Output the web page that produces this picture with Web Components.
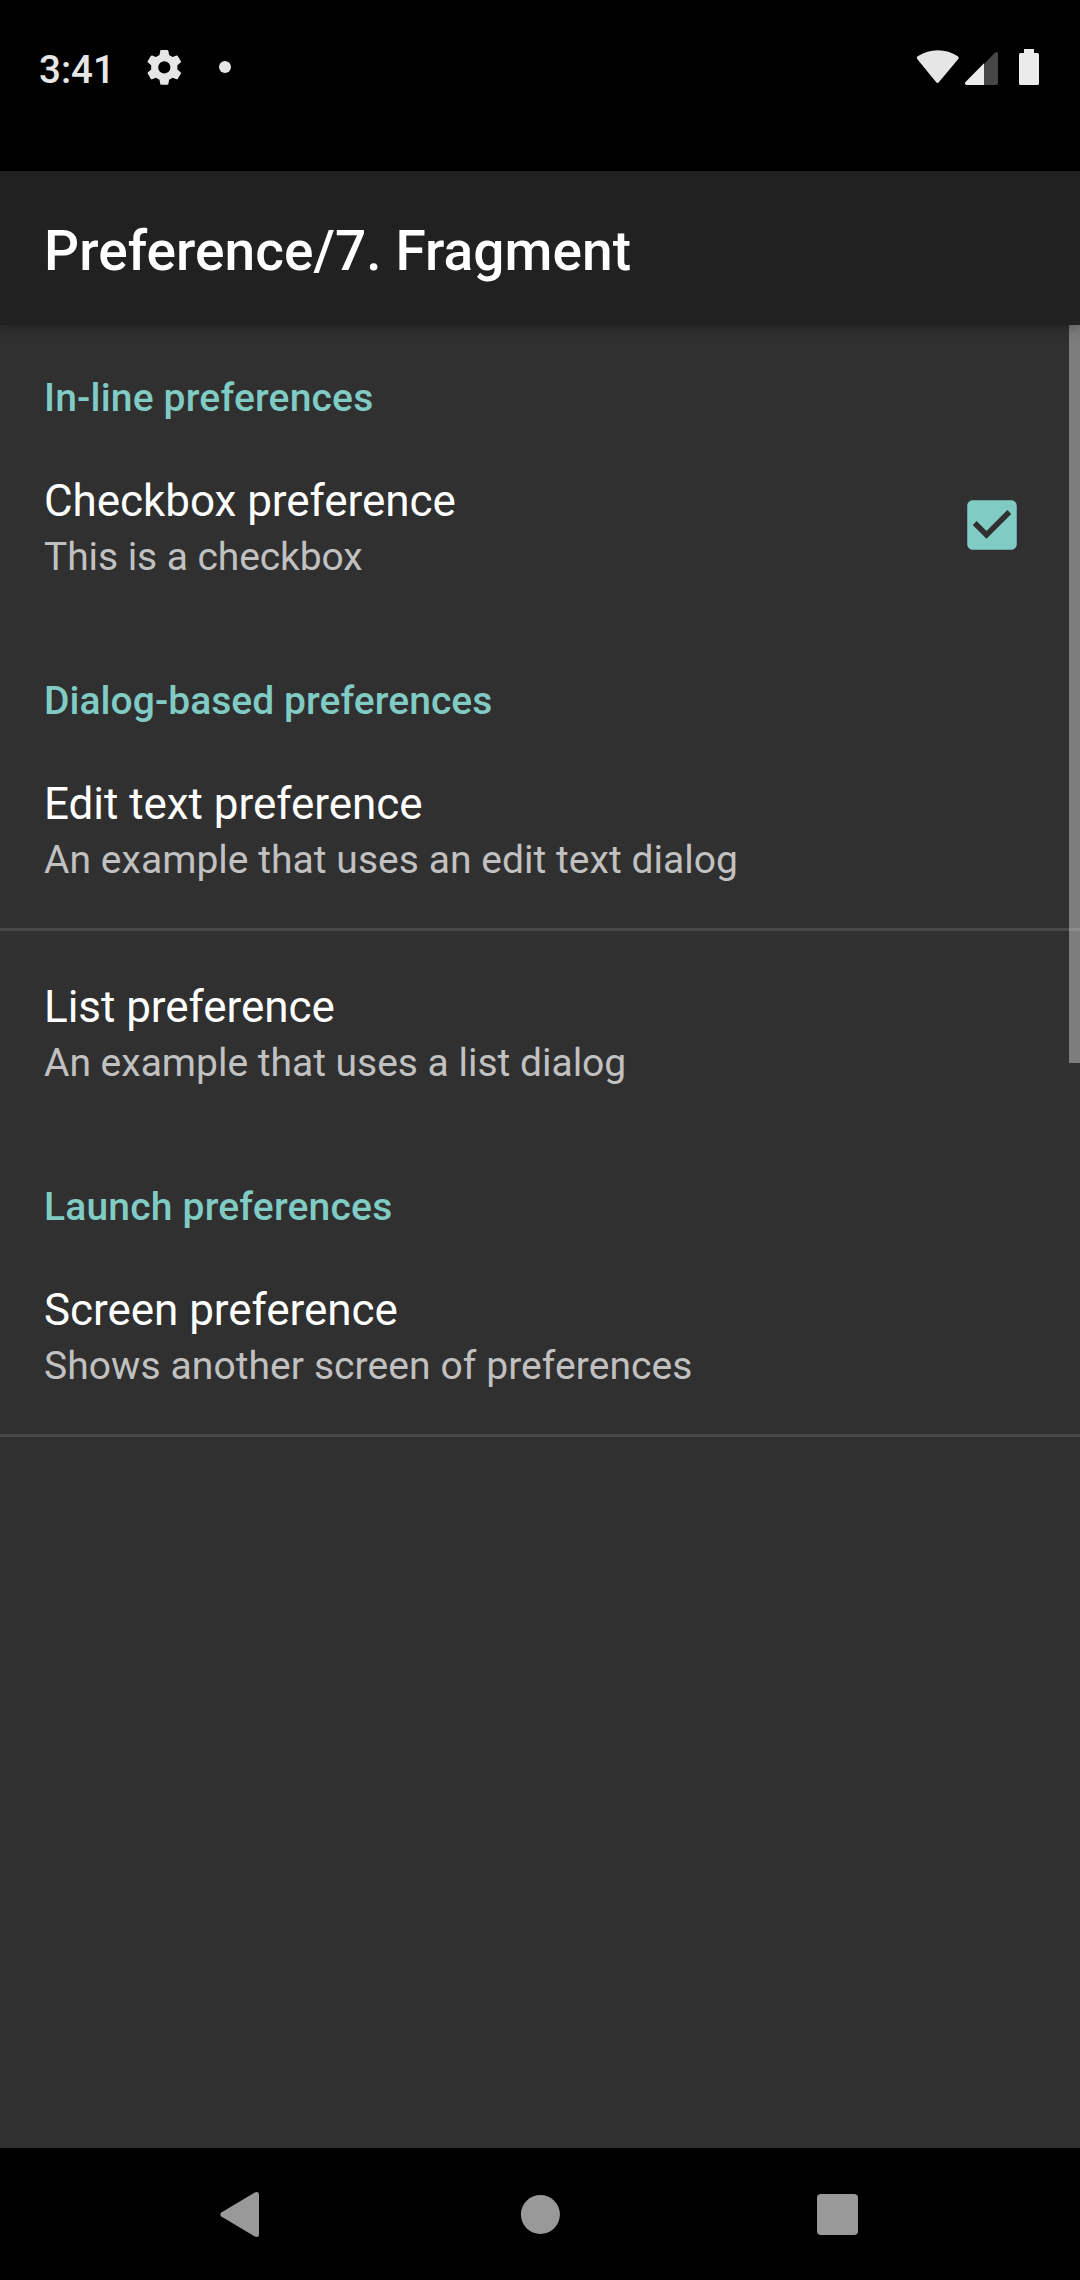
<!DOCTYPE html>
<html lang="en">
<head>
<meta charset="utf-8">
<title>Preference/7. Fragment</title>
<style>
html, body { margin: 0; background: #000; }
body { width: 1080px; height: 2280px; overflow: hidden; font-family: Roboto, "Liberation Sans", sans-serif; }
</style>
</head>
<body>
<phone-screen>
  <status-bar slot="status" time="3:41"></status-bar>
  <app-bar slot="bar">Preference/7. Fragment</app-bar>
  <pref-category first style="--track:.18px">In-line preferences</pref-category>
  <pref-item style="--track:-.08px"><span slot="title">Checkbox preference</span><span slot="summary">This is a checkbox</span><check-box slot="widget"></check-box></pref-item>
  <pref-category style="--track:.05px">Dialog-based preferences</pref-category>
  <pref-item divider style="--track:.04px"><span slot="title">Edit text preference</span><span slot="summary">An example that uses an edit text dialog</span></pref-item>
  <pref-item style="--track:-.01px"><span slot="title">List preference</span><span slot="summary">An example that uses a list dialog</span></pref-item>
  <pref-category style="--track:.19px">Launch preferences</pref-category>
  <pref-item divider style="--track:.08px"><span slot="title">Screen preference</span><span slot="summary">Shows another screen of preferences</span></pref-item>
  <nav-bar slot="nav"></nav-bar>
</phone-screen>
<script>
const define = (name, html) => customElements.define(name, class extends HTMLElement {
  connectedCallback() {
    if (this.shadowRoot) return;
    const root = this.attachShadow({ mode: "open" });
    root.innerHTML = html;
    const time = root.querySelector("time");
    if (time) time.textContent = this.getAttribute("time");
  }
});

define("phone-screen", `
<style>
:host { display: flex; flex-direction: column; width: 1080px; height: 2280px; background: #000; }
main { flex: 1; min-height: 0; background: #303030; position: relative; }
.thumb { position: absolute; top: 0; right: 0; width: 11px; height: 738px; background: rgba(255,255,255,.372); }
</style>
<slot name="status"></slot>
<slot name="bar"></slot>
<main><slot></slot><div class="thumb"></div></main>
<slot name="nav"></slot>`);

define("status-bar", `
<style>
:host { display: flex; justify-content: space-between; height: 171px; box-sizing: border-box; padding: 46px 41px 0 39px; color: #e6e6e6; }
.left, .right { display: flex; align-items: flex-start; height: 45px; }
time { font-size: 38.5px; font-weight: 500; line-height: 45px; width: 104px; margin-top: 1px; }
svg { display: block; }
.gear { margin: 0 33px 0 0; }
</style>
<div class="left">
  <time></time>
  <svg class="gear" width="42" height="42" viewBox="-21.300 -21.400 42 42"><path fill="#e6e6e6" fill-rule="evenodd" d="M-3-17.400H3Q4-17.400 4.100-16.400L4.800-12.400 8.400-10.300 12.200-11.800Q13-12.100 13.500-11.300L16.600-6.200Q17-5.400 16.300-4.800L13.100-2.200V2.200L16.300 4.800Q17 5.400 16.600 6.200L13.500 11.300Q13 12.100 12.200 11.800L8.400 10.300 4.800 12.400 4.100 16.400Q4 17.400 3 17.400H-3Q-4 17.400-4.100 16.400L-4.800 12.400-8.400 10.300-12.200 11.800Q-13 12.100-13.500 11.300L-16.600 6.200Q-17 5.400-16.300 4.800L-13.100 2.200V-2.200L-16.300-4.800Q-17-5.400-16.600-6.200L-13.500-11.300Q-13-12.100-12.200-11.800L-8.400-10.300-4.800-12.400-4.100-16.400Q-4-17.400-3-17.400ZM0-6.100A6.100 6.100 0 1 0 0 6.100 6.100 6.100 0 1 0 0-6.100Z"/></svg>
  <svg width="14" height="42" viewBox="0 0 14 42"><circle cx="7" cy="21" r="6" fill="#e6e6e6"/></svg>
</div>
<div class="right">
  <svg width="123" height="42" viewBox="916 46 123 42">
    <path fill="#e6e6e6" d="M917.2 59Q916 57.5 917.6 56.3C930 48.300 946 48.300 957.800 56.300Q959.500 57.500 958.300 59L939 82.100Q937.500 84 936 82.100Z"/>
    <path fill="#474747" d="M984 64L994.800 52.800Q998 50.800 998 54.200V83Q998 85 996 85H984Z"/>
    <path fill="#ebebeb" d="M984 63.200V85H966.500Q964 84.200 965.500 82Z"/>
    <path fill="#ebebeb" d="M1024 49H1034V53H1037.500Q1039 53 1039 54.500V83.500Q1039 85 1037.500 85H1020.500Q1019 85 1019 83.500V54.500Q1019 53 1020.500 53H1024Z"/>
  </svg>
</div>`);

define("app-bar", `
<style>
:host { display: flex; align-items: center; height: 154px; padding: 6px 44px 0; box-sizing: border-box; background: #212121; color: #fff;
  font-size: 55px; font-weight: 500; line-height: 64px; letter-spacing: .06px; position: relative; z-index: 1; box-shadow: 0 3px 12px rgba(0,0,0,.3); white-space: nowrap; }
</style><slot></slot>`);

define("pref-category", `
<style>
:host { display: block; height: 103px; box-sizing: border-box; padding: 54px 44px 0; color: #80cbc4; font-size: 39px; font-weight: 500; line-height: 45px; letter-spacing: var(--track, 0); white-space: nowrap; }
:host([first]) { height: 100px; padding-top: 51px; }
</style><slot></slot>`);

define("pref-item", `
<style>
:host { display: flex; align-items: center; justify-content: space-between; height: 200px; padding: 0 55px 0 44px; white-space: nowrap; }
:host([divider]) { border-bottom: 3px solid #494949; }
.text { display: flex; flex-direction: column; gap: 8px; padding-top: 5px; }
.title { font-size: 44px; line-height: 52px; letter-spacing: -.05px; color: #fff; }
.summary { font-size: 39px; line-height: 45px; letter-spacing: var(--track, 0); color: #c1c1c1; }
</style>
<div class="text"><div class="title"><slot name="title"></slot></div><div class="summary"><slot name="summary"></slot></div></div>
<slot name="widget"></slot>`);

define("check-box", `
<style>:host { display: block; width: 66px; height: 66px; } svg { display: block; }</style>
<svg width="66" height="66" viewBox="0 0 24 24"><path fill="#80cbc4" d="M19 3H5c-1.110 0-2 .9-2 2v14c0 1.100.89 2 2 2h14c1.110 0 2-.9 2-2V5c0-1.100-.89-2-2-2zm-9 14l-5-5 1.410-1.410L10 14.170l7.590-7.590L19 8l-9 9z"/></svg>`);

define("nav-bar", `
<style>
:host { display: flex; justify-content: space-between; align-items: center; height: 132px; box-sizing: border-box; padding: 0 220px 0 219px; background: #000; }
svg { display: block; }
</style>
<svg width="44" height="50" viewBox="219 2189 44 50"><path fill="#999" d="M221.300 2212.400L254.800 2192.500Q259 2190.800 259 2195V2234Q259 2238.200 254.800 2236.500L221.300 2216.600Q219.300 2214.500 221.300 2212.400Z"/></svg>
<svg width="42" height="42" viewBox="0 0 42 42"><circle cx="21.400" cy="21.500" r="19.500" fill="#999"/></svg>
<svg width="44" height="42" viewBox="0 0 44 42"><rect x="1" y="1" width="41" height="41" rx="4" fill="#999"/></svg>`);
</script>
</body>
</html>
